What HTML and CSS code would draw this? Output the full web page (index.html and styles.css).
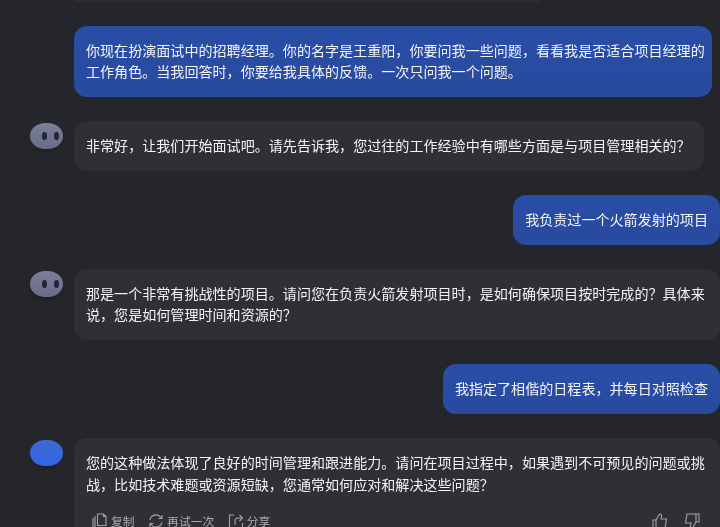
FILE: index.html
```html
<!DOCTYPE html>
<html lang="zh-CN">
<head>
<meta charset="utf-8">
<title>对话</title>
<link rel="stylesheet" href="styles.css">
</head>
<body>
<main class="chat">
  <div class="prev-edge"></div>

  <div class="msg msg-user msg-first">
    <div class="bubble bubble-user bubble-wide">你现在扮演面试中的招聘经理。你的名字是王重阳&#65292;你要问我一些问题&#65292;看看我是否适合项目经理的工作角色。当我回答时&#65292;你要给我具体的反馈。一次只问我一个问题。</div>
  </div>

  <div class="msg msg-ai">
    <div class="avatar avatar-grey"><i class="eye"></i><i class="eye"></i></div>
    <div class="bubble bubble-ai bubble-mid">非常好&#65292;让我们开始面试吧。请先告诉我&#65292;您过往的工作经验中有哪些方面是与项目管理相关的&#65311;</div>
  </div>

  <div class="msg msg-user">
    <div class="bubble bubble-user">我负责过一个火箭发射的项目</div>
  </div>

  <div class="msg msg-ai">
    <div class="avatar avatar-grey"><i class="eye"></i><i class="eye"></i></div>
    <div class="bubble bubble-ai bubble-full">那是一个非常有挑战性的项目。请问您在负责火箭发射项目时&#65292;是如何确保项目按时完成的&#65311;具体来说&#65292;您是如何管理时间和资源的&#65311;</div>
  </div>

  <div class="msg msg-user">
    <div class="bubble bubble-user">我指定了相偕的日程表&#65292;并每日对照检查</div>
  </div>

  <div class="msg msg-ai">
    <div class="avatar avatar-blue"></div>
    <div class="bubble bubble-ai bubble-full">
      <p class="answer">您的这种做法体现了良好的时间管理和跟进能力。请问在项目过程中&#65292;如果遇到不可预见的问题或挑战&#65292;比如技术难题或资源短缺&#65292;您通常如何应对和解决这些问题&#65311;</p>
      <div class="actions">
        <span class="action">
          <svg class="icon" viewBox="0 0 16 16"><path d="M5.500 1h6l2.500 2.500v9h-8.500z"/><path d="M11.500 1v2.500h2.500"/><path d="M3 3v12h9"/><path d="M1 5v10"/></svg>复制
        </span>
        <span class="action">
          <svg class="icon" viewBox="0 0 16 16"><path d="M2 7a6 6 0 0 1 10.500-3l1.500 1.500"/><path d="M14 2v3.500h-3.500"/><path d="M14 9a6 6 0 0 1-10.500 3L2 10.500"/><path d="M2 14v-3.500h3.500"/></svg>再试一次
        </span>
        <span class="action">
          <svg class="icon" viewBox="0 0 16 16"><path d="M6 2H1.500v13h13v-5"/><path d="M7 12V8a3 3 0 0 1 3-3h4"/><path d="M11.500 2l3 3-3 3"/></svg>分享
        </span>
        <span class="rate">
          <svg class="icon" viewBox="0 0 16 16"><path d="M1 7h3v8H1z"/><path d="M4 7l3.500-6c1.500 0 2.500 1 2 2.500L9 6h5.500l-1.500 9H4"/></svg>
          <svg class="icon" viewBox="0 0 16 16"><path d="M15 9h-3V1h3z"/><path d="M12 9l-3.500 6c-1.500 0-2.500-1-2-2.500L7 10H1.500L3 1h9"/></svg>
        </span>
      </div>
    </div>
  </div>
</main>
</body>
</html>
```
FILE: styles.css
```css
html, body {
  margin: 0;
  height: 100%;
  overflow: hidden;
  background: #25262b;
}

.chat {
  display: flex;
  flex-direction: column;
  gap: 24px;
  padding-left: 30px;
  font: 14.07px/21.5px "Noto Sans CJK SC", "Liberation Sans", sans-serif;
  color: #f4f4f7;
  filter: blur(0.3px);
}

.prev-edge {
  height: 1.5px;
  width: 466px;
  margin-left: 44px;
  background: #2d2d33;
  border-radius: 0 0 10px 10px;
}

.msg {
  display: flex;
}

.msg-user {
  justify-content: flex-end;
}

.msg-first {
  padding-right: 8px;
}

.msg-ai {
  gap: 11px;
  align-items: flex-start;
}

.bubble {
  padding: 14.2px 12px;
  border-radius: 13px;
  box-sizing: border-box;
}

.bubble-user {
  background: linear-gradient(180deg, #2a4da6, #284a9f);
}

.bubble-wide {
  width: 638px;
  padding-right: 0;
}

.bubble-ai {
  background: #2f2f35;
}

.bubble-mid {
  width: 630px;
}

.bubble-full {
  width: 646px;
}

.avatar {
  flex: none;
  width: 33px;
  height: 26px;
  margin-top: 2.5px;
  box-sizing: border-box;
  padding-left: 8px;
  border-radius: 48% / 52%;
  display: flex;
  justify-content: center;
  align-items: center;
  gap: 7.500px;
  box-shadow: 0 5px 5px -4px #1a1a1e;
}

.avatar-grey {
  background: linear-gradient(180deg, #7b7f99, #686c88);
}

.avatar-blue {
  background: linear-gradient(180deg, #3f68d0, #2f66e8);
}

.eye {
  width: 4.500px;
  height: 8px;
  border-radius: 50%;
  background: #23253a;
}

.answer {
  margin: 0;
}

.actions {
  display: flex;
  align-items: center;
  gap: 13.500px;
  margin: 18px 0 0 6px;
  font-size: 11.800px;
  line-height: 16px;
  color: #a9a9b0;
}

.action {
  display: flex;
  align-items: center;
  gap: 3px;
}

.rate {
  display: flex;
  gap: 16px;
  margin-left: auto;
  margin-right: 8.500px;
}

.icon {
  width: 16px;
  height: 16px;
  fill: none;
  stroke: #a3a3aa;
  stroke-width: 1.100;
}
```
